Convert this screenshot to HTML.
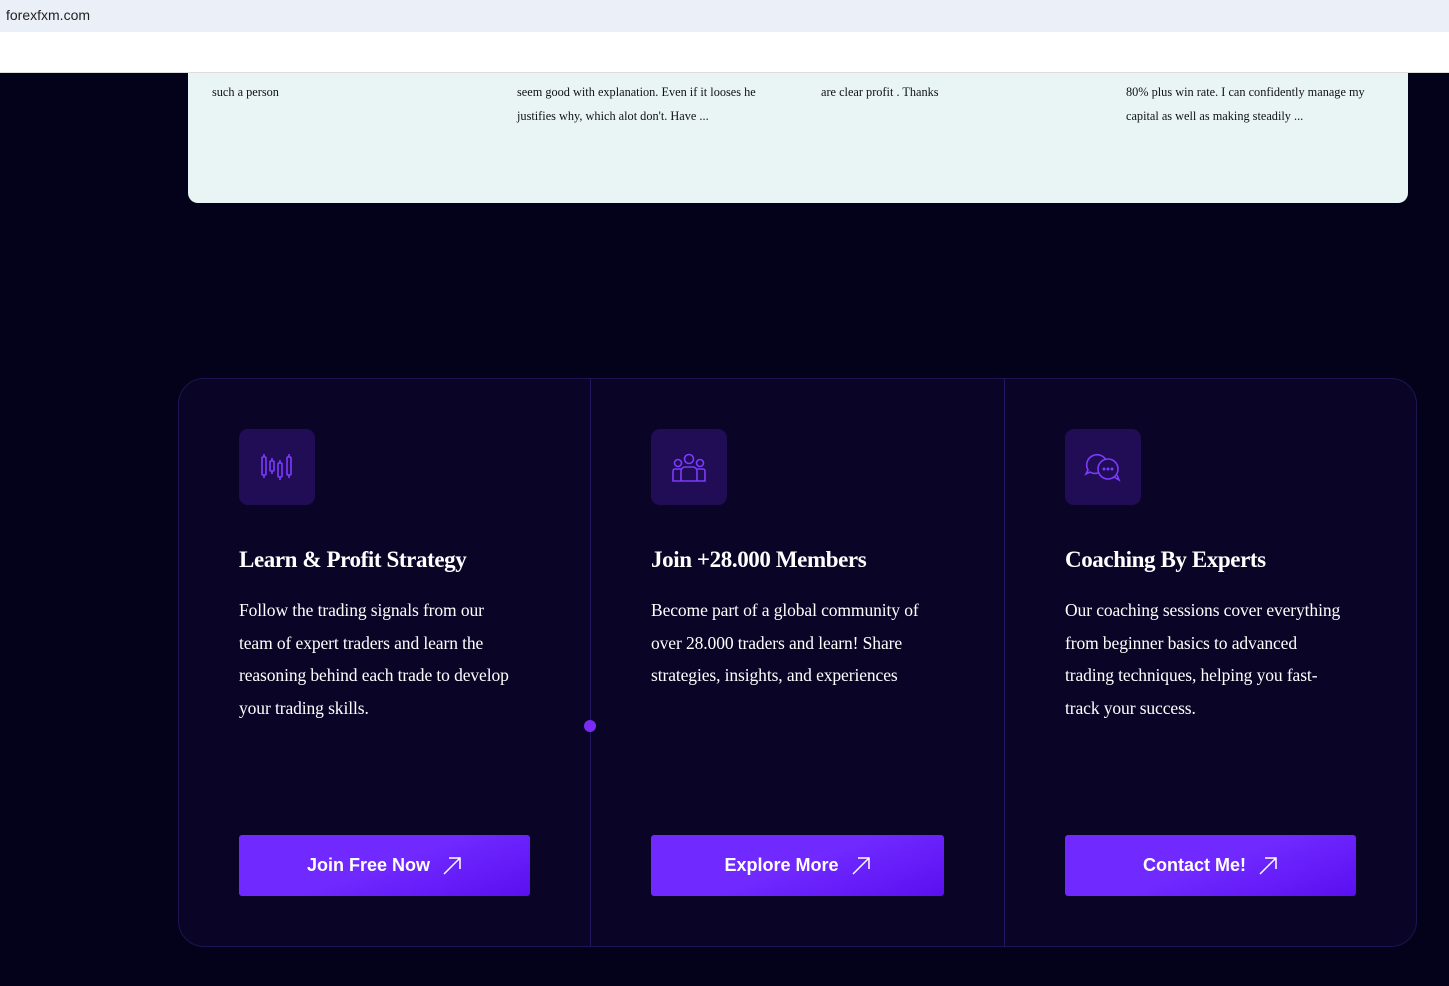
<!DOCTYPE html>
<html><head><style>
*{margin:0;padding:0;box-sizing:border-box}
body{width:1449px;height:986px;background:#03021a;position:relative;overflow:hidden;font-family:"Liberation Serif",serif}
.bar{position:absolute;left:0;top:0;width:1449px;height:32px;background:#ebeff7;font-family:"Liberation Sans",sans-serif;font-size:14px;color:#222;padding:7px 6px}
.white{position:absolute;left:0;top:32px;width:1449px;height:41px;background:#fff;border-bottom:1px solid #ddd;z-index:2}
.test{position:absolute;left:188px;top:40px;width:1220px;height:163px;background:#e9f5f5;border-radius:0 0 10px 10px}
.t{position:absolute;font-size:12.3px;line-height:24px;color:#111;top:80px}
.card{position:absolute;left:178px;top:378px;width:1239px;height:569px;background:#0a0527;border:1px solid #1f1452;border-radius:26px}
.div{position:absolute;top:0;width:1px;height:567px;background:#231660}
.col{position:absolute;top:50px}
.ic{width:76px;height:76px;background:#200d55;border-radius:9px;display:flex;align-items:center;justify-content:center}
h3{color:#fff;font-size:23px;font-weight:bold;margin-top:42px;letter-spacing:-0.4px}
p{color:#fff;font-size:17.5px;line-height:32.5px;margin-top:21px;letter-spacing:-0.1px}
.btn{position:absolute;top:456px;height:61px;border-radius:3px;background:linear-gradient(160deg,#7029ff 50%,#5a0ff0);color:#fff;font-family:"Liberation Sans",sans-serif;font-weight:bold;font-size:18px;display:flex;align-items:center;justify-content:center;gap:12px}
</style></head><body>
<div class="bar">forexfxm.com</div>
<div class="white"></div>
<div class="test">
<div class="t" style="left:24px;top:40px">such a person</div>
<div class="t" style="left:329px;top:40px">seem good with explanation. Even if it looses he<br>justifies why, which alot don't. Have ...</div>
<div class="t" style="left:633px;top:40px">are clear profit . Thanks</div>
<div class="t" style="left:938px;top:40px">80% plus win rate. I can confidently manage my<br>capital as well as making steadily ...</div>
</div>
<div class="card">
<div class="div" style="left:411px"></div>
<div class="div" style="left:825px"></div>
<div style="position:absolute;left:405px;top:341px;width:12px;height:12px;border-radius:50%;background:#7a2cf5"></div>
<div class="col" style="left:60px">
<div class="ic"><svg width="36" height="36" viewBox="0 0 36 36" fill="none" stroke="#7c3aff" stroke-width="1.6"><rect x="3" y="8" width="4" height="18" rx="1"/><path d="M5 5v3M5 26v3"/><rect x="11" y="12" width="4" height="10" rx="1"/><path d="M13 9v3M13 22v3"/><rect x="19" y="14" width="4" height="14" rx="1"/><path d="M21 11v3M21 28v3"/><rect x="28" y="8" width="4" height="18" rx="1"/><path d="M30 5v3M30 26v3"/></svg></div>
<h3>Learn &amp; Profit Strategy</h3>
<p>Follow the trading signals from our<br>team of expert traders and learn the<br>reasoning behind each trade to develop<br>your trading skills.</p>
</div>
<div class="btn" style="left:60px;width:291px">Join Free Now <svg width="20" height="20" viewBox="0 0 20 20" fill="none" stroke="#fff" stroke-width="1.5"><path d="M2 18L18 2M7 2h11v11"/></svg></div>
<div class="col" style="left:472px">
<div class="ic"><svg width="38" height="36" viewBox="0 0 38 36" fill="none" stroke="#7c3aff" stroke-width="1.6"><circle cx="19" cy="10" r="4.5"/><circle cx="8" cy="14" r="3.5"/><circle cx="30" cy="14" r="3.5"/><path d="M11 32v-10a4 4 0 0 1 4-4h8a4 4 0 0 1 4 4v10zM11 20H5a2 2 0 0 0-2 2v10h8M27 20h6a2 2 0 0 1 2 2v10h-8"/></svg></div>
<h3>Join +28.000 Members</h3>
<p>Become part of a global community of<br>over 28.000 traders and learn! Share<br>strategies, insights, and experiences</p>
</div>
<div class="btn" style="left:472px;width:293px">Explore More <svg width="20" height="20" viewBox="0 0 20 20" fill="none" stroke="#fff" stroke-width="1.5"><path d="M2 18L18 2M7 2h11v11"/></svg></div>
<div class="col" style="left:886px">
<div class="ic"><svg width="40" height="36" viewBox="0 0 40 36" fill="none" stroke="#7c3aff" stroke-width="1.6"><path d="M15 24a10 10 0 0 1-8-1l-4 2 2-4A10 10 0 1 1 23 11"/><circle cx="25" cy="20" r="10"/><path d="M31 28l5 3-2-5"/><circle cx="21" cy="20" r=".7" fill="#7c3aff"/><circle cx="25" cy="20" r=".7" fill="#7c3aff"/><circle cx="29" cy="20" r=".7" fill="#7c3aff"/></svg></div>
<h3>Coaching By Experts</h3>
<p>Our coaching sessions cover everything<br>from beginner basics to advanced<br>trading techniques, helping you fast-<br>track your success.</p>
</div>
<div class="btn" style="left:886px;width:291px">Contact Me! <svg width="20" height="20" viewBox="0 0 20 20" fill="none" stroke="#fff" stroke-width="1.5"><path d="M2 18L18 2M7 2h11v11"/></svg></div>
</div>
</body></html>
